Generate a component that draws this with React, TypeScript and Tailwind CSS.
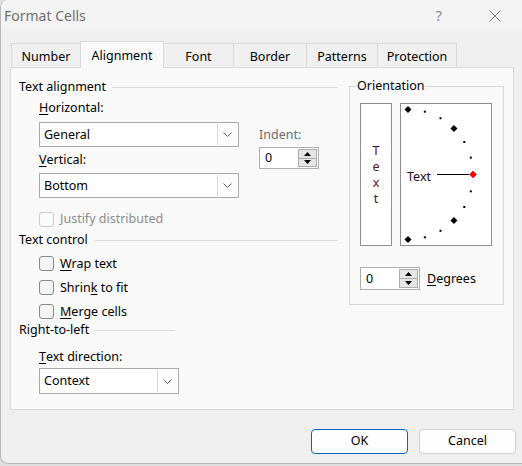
import clsx from "clsx"

const cn = (...args: Parameters<typeof clsx>) => clsx(args)

const tabs = [
  { label: "Number", w: "w-[70px]" },
  { label: "Alignment", w: "w-[84px]", active: true },
  { label: "Font", w: "w-[71px]" },
  { label: "Border", w: "w-[74px]" },
  { label: "Patterns", w: "w-[72px]" },
  { label: "Protection", w: "w-[80px]" },
]

function Key({ children }: { children: string }) {
  return <span className="underline decoration-1 underline-offset-[2px]">{children}</span>
}

function Chevron() {
  return (
    <svg width="9" height="5" viewBox="0 0 9 5" className="block">
      <polyline points="0.5,0.5 4.5,4.5 8.5,0.5" fill="none" stroke="#5f5f5f" strokeWidth="1" />
    </svg>
  )
}

function Combo({ value, className }: { value: string; className: string }) {
  return (
    <div className={cn("flex items-stretch border border-[#a9a9a9] bg-white", className)}>
      <span className="flex flex-1 items-center pt-px pl-[4px] text-[12.5px]">{value}</span>
      <span className="m-px flex w-[20px] items-center justify-center border-l border-[#d6d6d6] bg-[#fcfcfc]">
        <Chevron />
      </span>
    </div>
  )
}

function Spinner({ className }: { className: string }) {
  return (
    <div className={cn("flex border border-[#adadad] bg-white", className)}>
      <span className="flex flex-1 items-center pt-px pl-[5px] text-[12.5px]">0</span>
      <div className="m-px flex w-[19px] flex-col">
        <span className="flex flex-1 items-center justify-center border border-[#adadad] bg-[#e5e5e5]">
          <svg width="7" height="4" viewBox="0 0 7 4" className="block">
            <path d="M3.5 0L7 4H0Z" fill="#000" />
          </svg>
        </span>
        <span className="-mt-px flex flex-1 items-center justify-center border border-[#adadad] bg-[#e5e5e5]">
          <svg width="7" height="4" viewBox="0 0 7 4" className="block">
            <path d="M0 0H7L3.5 4Z" fill="#000" />
          </svg>
        </span>
      </div>
    </div>
  )
}

function Check({ disabled }: { disabled?: boolean }) {
  return (
    <span
      className={cn(
        "block size-[15px] shrink-0 rounded-[3px] border",
        disabled ? "border-[#cacaca] bg-[#fafafa]" : "border-[#8a8a8a] bg-[#f4f4f4]"
      )}
    />
  )
}

function Section({ title, className }: { title: string; className?: string }) {
  return (
    <div className={cn("flex h-[18px] items-center", className)}>
      <span className="pt-px text-[12.5px]">{title}</span>
      <span className="ml-[6px] h-px flex-1 bg-[#dadada]" />
    </div>
  )
}

function Dial() {
  const cx = 8
  const cy = 71.5
  const r = 65
  const angles = [90, 75, 60, 45, 30, 15, 0, -15, -30, -45, -60, -75, -90]

  return (
    <svg width="92" height="143" viewBox="0 0 92 143" className="block">
      <rect x="0.5" y="0.5" width="91" height="142" fill="#fff" stroke="#8f8f8f" />
      {angles.map((a) => {
        const rad = (a * Math.PI) / 180
        const x = cx + r * Math.cos(rad)
        const y = cy - r * Math.sin(rad)
        if (a === 0) {
          return (
            <path
              key={a}
              d={`M${x} ${y - 3.5}L${x + 3.5} ${y}L${x} ${y + 3.5}L${x - 3.5} ${y}Z`}
              fill="#ff0000"
              stroke="#b00000"
              strokeWidth="0.5"
            />
          )
        }
        if (a % 45 === 0) {
          return (
            <path
              key={a}
              d={`M${x} ${y - 3.5}L${x + 3.5} ${y}L${x} ${y + 3.5}L${x - 3.5} ${y}Z`}
              fill="#000"
            />
          )
        }
        return <rect key={a} x={x - 1} y={y - 1} width="2" height="2" fill="#000" />
      })}
      <line x1="37" y1="71.5" x2="69" y2="71.5" stroke="#000" strokeWidth="1" />
      <text x="7" y="78" fontSize="12.5" fontFamily="Noto Sans" fill="#1a0a20">
        Text
      </text>
    </svg>
  )
}

export default function App() {
  return (
    <div className="h-[466px] w-[522px] overflow-hidden bg-[#dedede] font-['Noto_Sans',sans-serif] text-[12.5px] text-black">
      <div className="flex h-[464px] w-[522px] flex-col overflow-hidden rounded-l-[8px] border-b border-l border-[#b8b8b8] bg-[#efefef]">
        {/* Title bar */}
        <div className="flex h-[31px] shrink-0 items-center bg-[#f3f3f3]">
          <span className="pl-[3px] text-[14px] text-[#707070]">Format Cells</span>
          <span className="ml-auto text-[15px] text-[#8c8c8c]">?</span>
          <svg width="12" height="12" viewBox="0 0 12 12" className="mr-[21px] ml-[47px] block">
            <path d="M0.5 0.5L11.5 11.5M11.5 0.5L0.5 11.5" stroke="#7a7a7a" strokeWidth="1" />
          </svg>
        </div>

        <div className="flex flex-1 flex-col pl-[9px]">
          {/* Tabs */}
          <div className="mt-[10px] flex h-[26px] items-end pl-[1px]">
            {tabs.map((t) => (
              <div
                key={t.label}
                className={cn(
                  "-ml-px flex items-center justify-center border border-b-0 border-[#d9d9d9] text-[12.5px] first:ml-0",
                  t.w,
                  t.active ? "relative z-10 -mb-px h-[27px] bg-[#f9f9f9] pt-[2px]" : "h-[24px] bg-[#f0f0f0] pt-[4px]"
                )}
              >
                {t.label}
              </div>
            ))}
          </div>

          {/* Panel */}
          <div className="flex h-[343px] w-[504px] border border-[#d9d9d9] bg-[#f9f9f9] pl-[8px]">
            {/* Left column */}
            <div className="flex w-[319px] flex-col">
              <Section title="Text alignment" className="mt-[10px]" />
              <div className="flex pl-[20px]">
                <div className="flex w-[200px] flex-col">
                  <div className="mt-[3px] flex h-[18px] items-center pt-px">
                    <Key>H</Key>orizontal:
                  </div>
                  <Combo value="General" className="mt-[5px] h-[25px] w-[200px]" />
                  <div className="mt-[4px] flex h-[18px] items-center pt-px">
                    <Key>V</Key>ertical:
                  </div>
                  <Combo value="Bottom" className="mt-[4px] h-[25px] w-[200px]" />
                </div>
                <div className="ml-[20px] flex flex-col">
                  <div className="mt-[30px] flex h-[18px] items-center pt-px text-[#6d6d6d]">Indent:</div>
                  <Spinner className="mt-[3px] h-[22px] w-[60px]" />
                </div>
              </div>
              <div className="mt-[14px] flex h-[15px] items-center pl-[20px]">
                <Check disabled />
                <span className="ml-[6px] text-[#8c8c8c]">Justify distributed</span>
              </div>

              <Section title="Text control" className="mt-[4px]" />
              <div className="mt-[7px] flex flex-col gap-[9px] pl-[20px]">
                <div className="flex h-[15px] items-center">
                  <Check />
                  <span className="ml-[6px] pt-px">
                    <Key>W</Key>rap text
                  </span>
                </div>
                <div className="flex h-[15px] items-center">
                  <Check />
                  <span className="ml-[6px] pt-px">
                    Shrin<Key>k</Key> to fit
                  </span>
                </div>
                <div className="flex h-[15px] items-center">
                  <Check />
                  <span className="ml-[6px] pt-px">
                    <Key>M</Key>erge cells
                  </span>
                </div>
              </div>

              <Section title="Right-to-left" className="mt-[2px] w-[156px]" />
              <div className="mt-[9px] flex h-[18px] items-center pt-px pl-[20px]">
                <Key>T</Key>ext direction:
              </div>
              <Combo value="Context" className="mt-[2px] ml-[20px] h-[26px] w-[140px]" />
            </div>

            {/* Orientation */}
            <fieldset className="mt-[9px] ml-[11px] h-[228px] w-[155px] border border-[#d6d6d6]">
              <legend className="ml-[6px] px-[1px] leading-[18px]">Orientation</legend>
              <div className="flex flex-col pl-[10px]">
                <div className="mt-[8px] flex gap-[8px]">
                  <div className="flex h-[143px] w-[32px] flex-col items-center justify-center border border-[#8f8f8f] bg-white text-[12.5px] leading-[16px] text-[#5a1024]">
                    <span className="block h-[16px]">T</span>
                    <span className="block h-[16px]">e</span>
                    <span className="block h-[16px]">x</span>
                    <span className="block h-[16px]">t</span>
                  </div>
                  <Dial />
                </div>
                <div className="mt-[21px] flex items-center">
                  <Spinner className="h-[23px] w-[60px]" />
                  <span className="ml-[7px] pt-[2px]">
                    <Key>D</Key>egrees
                  </span>
                </div>
              </div>
            </fieldset>
          </div>

          {/* Buttons */}
          <div className="mt-[19px] flex justify-end gap-[11px] pr-[6px]">
            <button className="h-[25px] w-[97px] rounded-[4px] border border-[#0067c0] bg-[#fdfdfd] text-[12.5px]">
              OK
            </button>
            <button className="h-[25px] w-[97px] rounded-[4px] border border-[#d0d0d0] bg-[#fdfdfd] text-[12.5px]">
              Cancel
            </button>
          </div>
        </div>
      </div>
    </div>
  )
}
